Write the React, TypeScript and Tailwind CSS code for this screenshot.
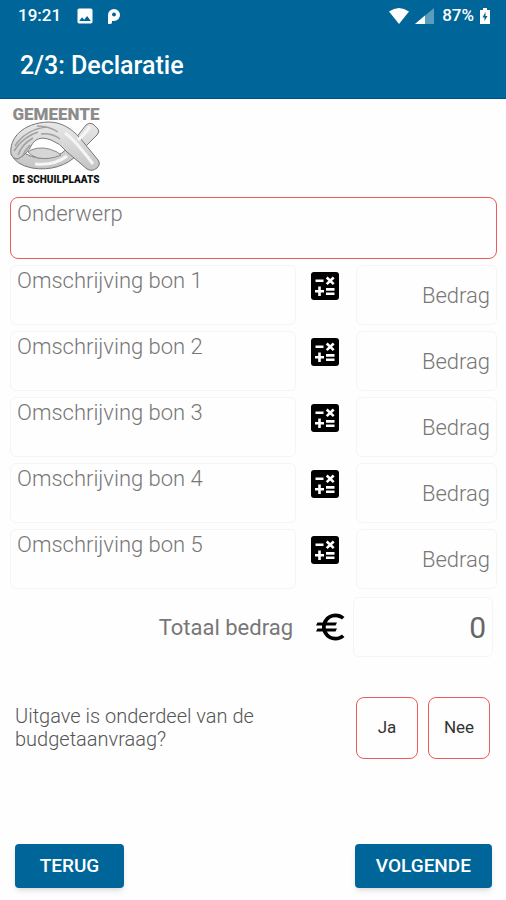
import React from "react";
import { MdEuro, MdImage } from "react-icons/md";

const RECEIPTS = [1, 2, 3, 4, 5];

function StatusBar() {
  return (
    <div className="flex h-8 items-center justify-between pl-[18px] pr-4 text-[17px] font-medium">
      <div className="flex items-center">
        <span>19:21</span>
        <MdImage className="ml-3.5 size-5" />
        <svg viewBox="0 0 14 16" className="ml-3 h-4 w-3.5">
          <path d="M1 16V7a6 6 0 1 1 6 6H5v1.500Q4.700 16 3 16Z" fill="currentColor" />
          <circle cx="7" cy="6.500" r="2" fill="#006699" />
        </svg>
      </div>
      <div className="flex items-center">
        <svg viewBox="0 0 20 16" className="h-4 w-5">
          <path d="M0 3.500Q10-3.500 20 3.500L10 16Z" fill="currentColor" />
        </svg>
        <svg viewBox="0 0 19 16" className="ml-1.5 h-4 w-[19px]">
          <path d="M0 16 19 0v16Z" fill="#5b9dbd" />
          <path d="M0 16 10 7.500V16Z" fill="currentColor" />
        </svg>
        <span className="ml-2">87%</span>
        <svg viewBox="0 0 10 16" className="ml-1.5 h-4 w-2.5">
          <path d="M0 2h3V0h4v2h3v14H0Z" fill="currentColor" />
          <path d="M5.500 4 2.500 9.500h2V13l3-5h-2Z" fill="#006699" />
        </svg>
      </div>
    </div>
  );
}

function Logo() {
  return (
    <svg
      viewBox="0 0 92 84"
      className="h-[84px] w-[92px]"
      role="img"
      aria-label="Gemeente De Schuilplaats"
    >
      <defs>
        <linearGradient id="body" x1="0" y1="0" x2="0" y2="1">
          <stop offset="0" stopColor="#e8e8e8" />
          <stop offset="1" stopColor="#c4c4c4" />
        </linearGradient>
      </defs>
      <g fontFamily="Roboto, sans-serif" fontWeight="900" textAnchor="middle">
        <text x="46" y="16" fontSize="17" fill="#8c8c8c">
          GEMEENTE
        </text>
        <text x="46" y="79" fontSize="10" fill="#111">
          DE SCHUILPLAATS
        </text>
      </g>
      <g fill="url(#body)" stroke="#777" strokeWidth="1">
        <path d="M76 21Q79 18 83 20L88 25Q90 28 87 31L68 50C57 62 40 67 22 64Q6 61 1 50L8 44Q20 56 38 54Q53 52 62 39Z" />
        <path d="M1 50C-1 34 13 19 38 18C52 18 62 25 70 34L88 56Q91 60 87 64Q82 68 77 65L57 48Q50 39 41 36C30 32 25 35 21 42Q18 49 8 55Q3 55 1 50Z" />
      </g>
      <path
        d="M21 46Q33 41 47 48L51 51Q40 56 28 54Q21 52 18 48Z"
        fill="#d6d6d6"
        stroke="#888"
        strokeWidth="1"
      />
      <path
        d="M5 42Q15 26 36 23M4 47Q13 33 28 28M8 51Q12 40 23 34M12 53Q15 46 20 41M27 22Q39 22 48 28M31 30Q42 29 50 35"
        fill="none"
        stroke="#a0a0a0"
        strokeWidth="1.5"
      />
      <path
        d="M55 29Q65 36 83 60M80 23Q73 32 68 36M25 60Q44 62 57 52"
        fill="none"
        stroke="#f5f5f5"
        strokeWidth="3"
      />
    </svg>
  );
}

function CalculateIcon() {
  return (
    <svg viewBox="0 0 28 28" className="size-7">
      <rect width="28" height="28" rx="3" fill="#000" />
      <path
        d="M4.500 8.800h8M15.700 5.500l7 6.600m0-6.600-7 6.600M8.500 14.500v9.500M4 19.200h9M15 17.400h8.500M15 21.700h8.500"
        fill="none"
        stroke="#fff"
        strokeWidth="2.600"
      />
    </svg>
  );
}

function ReceiptRow({ number }: { number: number }) {
  return (
    <div className="flex h-[60px]">
      <textarea
        aria-label={`Omschrijving bon ${number}`}
        placeholder={`Omschrijving bon ${number}`}
        className="min-w-0 flex-1 resize-none rounded-md border border-[#f5f5f5] px-1.5 text-[22px] leading-[30px] font-light placeholder:text-[#777]"
      />
      <button
        type="button"
        aria-label={`Bereken bon ${number}`}
        className="flex w-[60px] pt-[7px] pl-[15px]"
      >
        <CalculateIcon />
      </button>
      <input
        type="text"
        inputMode="decimal"
        aria-label={`Bedrag bon ${number}`}
        placeholder="Bedrag"
        className="w-[141px] rounded-md border border-[#f5f5f5] px-1.5 text-right text-[22px] font-light placeholder:text-[#777]"
      />
    </div>
  );
}

export default function App() {
  return (
    <div className="flex min-h-screen flex-col bg-[#fefefe] font-[Roboto,sans-serif]">
      <header className="border-b border-[#004a86] bg-[#006699] text-white">
        <StatusBar />
        <h1 className="px-5 pt-[18px] pb-4 text-[25px] leading-8 font-medium">
          2/3: Declaratie
        </h1>
      </header>

      <form className="flex flex-1 flex-col pt-[5px] pr-[9px] pb-3 pl-2.5">
        <Logo />

        <textarea
          aria-label="Onderwerp"
          placeholder="Onderwerp"
          className="mt-[9px] h-[62px] resize-none rounded-lg border border-[#ee5a5a] px-1.5 text-[22px] leading-[32px] font-light placeholder:text-[#777]"
        />

        <div className="mt-1.5 flex flex-col gap-1.5">
          {RECEIPTS.map((number) => (
            <ReceiptRow key={number} number={number} />
          ))}
        </div>

        <div className="mt-2 flex items-center justify-end pr-1">
          <label htmlFor="total" className="text-[22px] text-[#777]">
            Totaal bedrag
          </label>
          <MdEuro className="mr-1 ml-5 size-9 text-black" />
          <input
            id="total"
            type="text"
            readOnly
            value="0"
            className="h-[60px] w-[140px] rounded-md border border-[#f5f5f5] px-1.5 text-right text-[30px] text-[#666]"
          />
        </div>

        <div className="mt-10 flex items-center justify-between pr-[7px] pl-[5px]">
          <p className="max-w-[280px] text-[20px] leading-[23px] font-light text-[#555]">
            Uitgave is onderdeel van de budgetaanvraag?
          </p>
          <div className="flex gap-2.5">
            {["Ja", "Nee"].map((answer) => (
              <button
                key={answer}
                type="button"
                className="h-[62px] w-[62px] rounded-lg border border-[#ee5a5a] text-[17px] text-[#333]"
              >
                {answer}
              </button>
            ))}
          </div>
        </div>

        <div className="mt-auto flex justify-between pr-[5px] pl-[5px]">
          {["Terug", "Volgende"].map((action) => (
            <button
              key={action}
              type="button"
              className="h-11 min-w-[109px] rounded bg-[#006699] px-[21px] text-[19px] font-medium text-white uppercase shadow-md"
            >
              {action}
            </button>
          ))}
        </div>
      </form>
    </div>
  );
}
